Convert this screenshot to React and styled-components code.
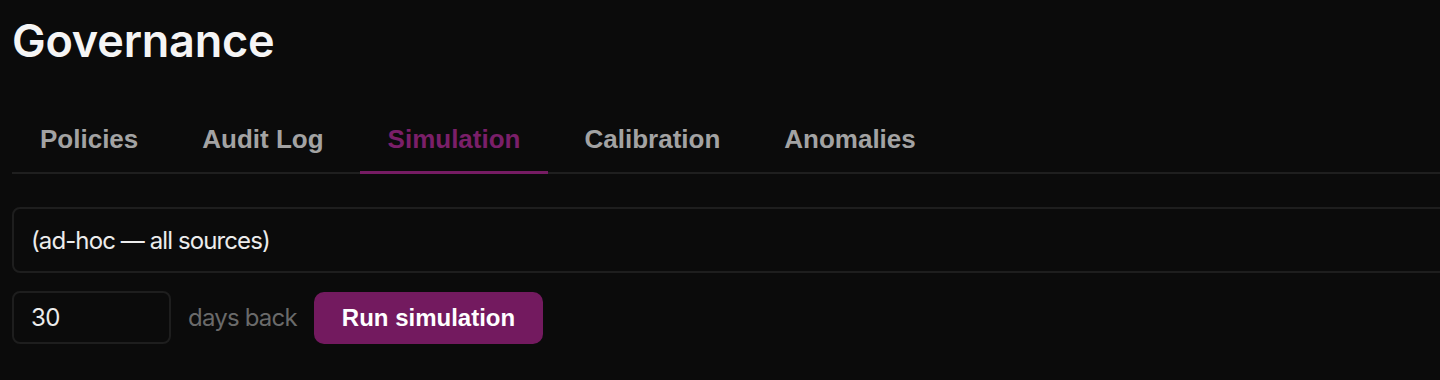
import React, { useState } from 'react'
import styled, { createGlobalStyle } from 'styled-components'

const GlobalStyle = createGlobalStyle`
    html, body {
        margin: 0;
        padding: 0;
        background: #0b0b0b;
        overflow: hidden;
    }
    * {
        box-sizing: border-box;
    }
`

const TABS = ['Policies', 'Audit Log', 'Simulation', 'Calibration', 'Anomalies']

const App = () => {
    const [active, setActive] = useState('Simulation')
    const [days, setDays] = useState('30')

    return (
        <Page>
            <GlobalStyle />
            <Title>Governance</Title>

            <TabBar>
                {TABS.map((tab) => (
                    <Tab
                        key={tab}
                        $active={tab === active}
                        onClick={() => setActive(tab)}
                    >
                        {tab}
                    </Tab>
                ))}
            </TabBar>

            <Form>
                <SourceSelect>(ad-hoc — all sources)</SourceSelect>

                <Row>
                    <DaysInput
                        value={days}
                        onChange={(e) => setDays(e.target.value)}
                    />
                    <Hint>days back</Hint>
                    <RunButton>Run simulation</RunButton>
                </Row>
            </Form>
        </Page>
    )
}

export default App

const Page = styled.div`
    width: 1500px;
    padding: 14px 0 0 12px;
    font-family: Inter, 'Noto Sans', sans-serif;
    color: #f2f2f2;
`

const Title = styled.h1`
    margin: 0;
    font-size: 45px;
    font-weight: 600;
    line-height: 54px;
    letter-spacing: -0.2px;
    color: #f5f5f5;
`

const TabBar = styled.div`
    margin-top: 42px;
    display: flex;
    gap: 8px;
    border-bottom: 2px solid #1f1f1f;
`

const Tab = styled.button`
    background: none;
    border: none;
    border-bottom: 3px solid ${(p) => (p.$active ? '#761c63' : 'transparent')};
    margin-bottom: -2px;
    padding: 14px 28px 17px;
    font-family: 'Liberation Sans', Arial, sans-serif;
    font-size: 26px;
    font-weight: 700;
    line-height: 30px;
    color: ${(p) => (p.$active ? '#7a1f69' : '#a3a3a3')};
    cursor: pointer;
`

const Form = styled.div`
    margin-top: 33px;
    display: flex;
    flex-direction: column;
    gap: 18px;
`

const SourceSelect = styled.div`
    height: 66px;
    display: flex;
    align-items: center;
    padding: 0 17px;
    border: 2px solid #1e1e1e;
    border-radius: 8px;
    font-size: 24px;
    letter-spacing: -0.9px;
    color: #ececec;
`

const Row = styled.div`
    display: flex;
    align-items: center;
    gap: 17px;
`

const DaysInput = styled.input`
    width: 159px;
    height: 53px;
    padding: 0 17px;
    background: #0b0b0b;
    border: 2px solid #1e1e1e;
    border-radius: 8px;
    font-family: Inter, 'Noto Sans', sans-serif;
    font-size: 24px;
    letter-spacing: -0.6px;
    color: #ececec;
    outline: none;
`

const Hint = styled.span`
    font-size: 24px;
    letter-spacing: -0.8px;
    color: #6a6a6a;
`

const RunButton = styled.button`
    height: 52px;
    padding: 0 28px;
    background: #731a5f;
    border: none;
    border-radius: 10px;
    font-family: 'Liberation Sans', Arial, sans-serif;
    font-size: 24px;
    font-weight: 700;
    color: #ffffff;
    cursor: pointer;
`
